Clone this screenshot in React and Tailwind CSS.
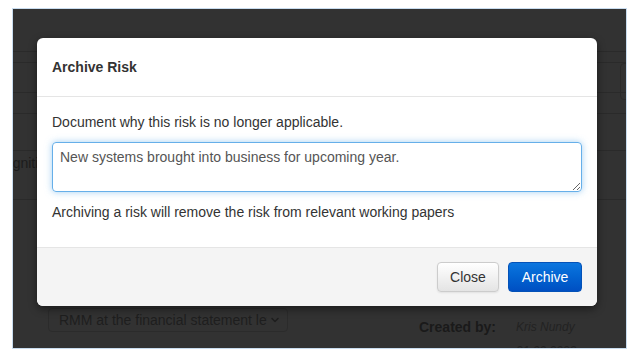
import { ChevronDown } from 'lucide-react';

function BackgroundPage() {
  return (
    <div className="flex flex-col text-[14px] text-[#1e1e1e]">
      <div className="h-[43px] border-b border-[#2a2a2a]" />
      <div className="h-[11px] border-b border-[#2a2a2a]" />
      <div className="h-[30px] border-b border-[#2a2a2a] flex justify-end">
        <div className="w-[8px] h-[37px] mr-[-2px] border border-[#2a2a2a] rounded-l-[4px] shrink-0" />
      </div>
      <div className="h-[21px] border-b border-[#2a2a2a]" />
      <div className="h-[37px] border-b border-[#2a2a2a]" />
      <div className="h-[49px] border-b border-[#2a2a2a] flex items-start pt-[2px]">
        <span className="ml-[-33px] leading-5 text-[14px] text-[#1c1c1c] whitespace-nowrap">Recognition</span>
      </div>
      <div className="flex items-start pt-[108px]">
        <div className="ml-[35px] w-[240px] h-[24px] border border-[#2b2b2b] rounded-[4px] flex items-center pl-[10px] pr-[6px] text-[#1e1e1e] overflow-hidden shrink-0">
          <span className="whitespace-nowrap overflow-hidden flex-1">RMM at the financial statement level</span>
          <ChevronDown size={12} strokeWidth={3} className="text-[#1e1e1e] shrink-0 ml-[2px]" />
        </div>
        <span className="ml-[131px] mt-[9px] font-bold text-[#1a1a1a] leading-5 whitespace-nowrap">Created by:</span>
        <div className="ml-[20px] mt-[7px] flex flex-col text-[12px] italic text-[#222] leading-[24px] whitespace-nowrap">
          <span>Kris Nundy</span>
          <span>21.09.2023</span>
        </div>
      </div>
    </div>
  );
}

function ArchiveModal() {
  return (
    <div className="absolute left-[24px] top-[29px] w-[560px] h-[268px] bg-white rounded-[6px] shadow-[0_3px_9px_rgba(0,0,0,0.45)] flex flex-col overflow-hidden">
      <div className="h-[59px] border-b border-[#e5e5e5] px-[15px] flex items-center">
        <h3 className="text-[14px] font-bold text-[#333] leading-5 mt-[-1px]">Archive Risk</h3>
      </div>
      <div className="px-[15px] pt-[15px] pb-[25px] text-[14px] text-[#333] leading-5">
        <p>Document why this risk is no longer applicable.</p>
        <textarea
          defaultValue="New systems brought into business for upcoming year."
          className="mt-[10px] block w-full h-[50px] border border-[#66afe9] rounded-[4px] px-[7px] pt-[4px] text-[14px] leading-5 text-[#555] shadow-[0_0_7px_rgba(102,175,233,0.6)] outline-none"
          style={{ fontFamily: '"Liberation Sans", Arial, sans-serif' }}
        />
        <p className="mt-[10px]">Archiving a risk will remove the risk from relevant working papers</p>
      </div>
      <div className="flex-1 border-t border-[#e5e5e5] bg-[#f4f4f4] flex items-start justify-end pt-[14px] pr-[15px] gap-[9px]">
        <button className="w-[62px] h-[30px] border border-[#cccccc] rounded-[4px] bg-gradient-to-b from-white to-[#e4e4e4] text-[14px] text-[#333] shadow-[0_1px_2px_rgba(0,0,0,0.08)]">
          Close
        </button>
        <button className="w-[74px] h-[30px] border border-[#0452b8] rounded-[4px] bg-gradient-to-b from-[#0c76df] to-[#004fc2] text-[14px] text-white">
          Archive
        </button>
      </div>
    </div>
  );
}

export default function App() {
  return (
    <div
      className="w-[635px] h-[361px] bg-white pt-[8px] pl-[12px] overflow-hidden"
      style={{ fontFamily: '"Liberation Sans", Arial, sans-serif' }}
    >
      <div className="relative w-[615px] h-[341px] border border-[#c8dcef] bg-[#323232] overflow-hidden">
        <BackgroundPage />
        <ArchiveModal />
      </div>
    </div>
  );
}
